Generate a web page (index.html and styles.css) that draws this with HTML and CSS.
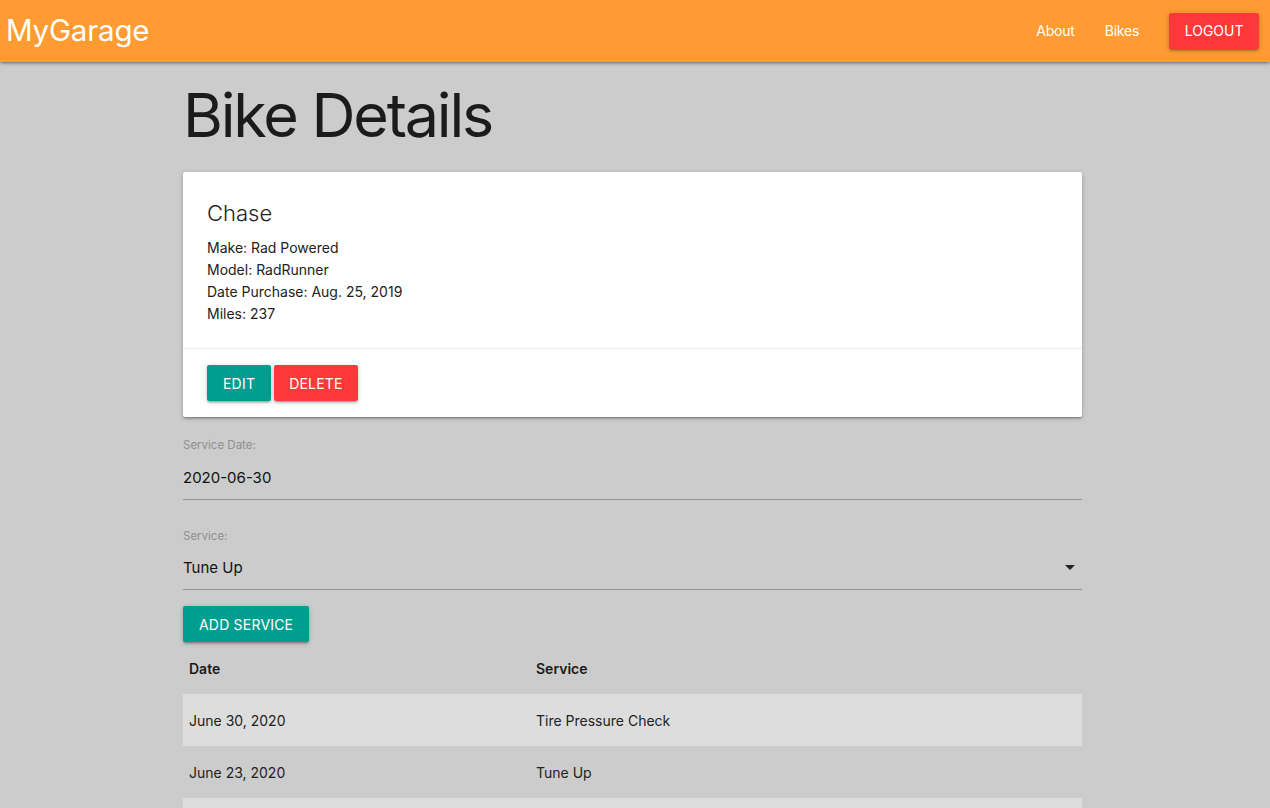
FILE: index.html
```html
<!DOCTYPE html>
<html>
<head>
<meta charset="utf-8">
<title>MyGarage</title>
<link rel="stylesheet" href="styles.css">
</head>
<body>
<nav class="nav">
  <a class="brand" href="#">MyGarage</a>
  <ul class="nav-links">
    <li><a href="#">About</a></li>
    <li><a href="#">Bikes</a></li>
    <li><a class="btn btn-red" href="#">LOGOUT</a></li>
  </ul>
</nav>
<main class="container">
  <h1 class="page-title">Bike Details</h1>
  <div class="card">
    <div class="card-content">
      <span class="card-title">Chase</span>
      <p>Make: Rad Powered</p>
      <p>Model: RadRunner</p>
      <p>Date Purchase: Aug. 25, 2019</p>
      <p>Miles: 237</p>
    </div>
    <div class="card-action">
      <a class="btn btn-teal" href="#">EDIT</a>
      <a class="btn btn-red" href="#">DELETE</a>
    </div>
  </div>
  <form class="service-form">
    <div class="field">
      <label class="field-label">Service Date:</label>
      <div class="field-input">2020-06-30</div>
    </div>
    <div class="field field-select">
      <label class="field-label">Service:</label>
      <div class="field-input">
        <span>Tune Up</span>
        <svg class="caret" width="24" height="24" viewBox="0 0 24 24"><path d="M7 10l5 5 5-5z" fill="#222"/></svg>
      </div>
    </div>
    <button type="button" class="btn btn-teal btn-add">ADD SERVICE</button>
  </form>
  <table class="services">
    <thead>
      <tr><th class="col-date">Date</th><th>Service</th></tr>
    </thead>
    <tbody>
      <tr><td>June 30, 2020</td><td>Tire Pressure Check</td></tr>
      <tr><td>June 23, 2020</td><td>Tune Up</td></tr>
      <tr class="row-empty"><td></td><td></td></tr>
    </tbody>
  </table>
</main>
</body>
</html>
```
FILE: styles.css
```css
* { box-sizing: border-box; }
html, body { margin: 0; padding: 0; }
body {
  background: #cccccc;
  font-family: "Inter", "Roboto", "Liberation Sans", sans-serif;
  font-size: 14px;
  color: rgba(0,0,0,0.87);
  line-height: 1.5;
}
a { text-decoration: none; color: inherit; }

.nav {
  height: 62px;
  background: #ff9b33;
  display: flex;
  align-items: center;
  justify-content: space-between;
  box-shadow: 0 2px 2px 0 rgba(0,0,0,0.14), 0 3px 1px -2px rgba(0,0,0,0.12), 0 1px 5px 0 rgba(0,0,0,0.2);
  position: relative;
}
.brand {
  color: #fff;
  font-size: 29.5px;
  padding-left: 6px;
  letter-spacing: -0.2px;
  margin-top: -2px;
}
.nav-links {
  list-style: none;
  margin: -1px 0 0 0;
  padding: 0 11px 0 0;
  display: flex;
  align-items: center;
}
.nav-links li a { color: #fff; font-size: 14px; padding: 0 15px; letter-spacing: -0.2px; }
.nav-links li:first-child a { padding-right: 15px; }
.nav-links li a.btn { margin-left: 15px; padding: 0 15.5px; letter-spacing: 0; }

.btn {
  display: inline-flex;
  align-items: center;
  justify-content: center;
  height: 36px;
  padding: 0 16px;
  border: none;
  border-radius: 2px;
  color: #fff;
  font-family: inherit;
  font-size: 14px;
  letter-spacing: 0.2px;
  box-shadow: 0 2px 2px 0 rgba(0,0,0,0.14), 0 3px 1px -2px rgba(0,0,0,0.12), 0 1px 5px 0 rgba(0,0,0,0.2);
  cursor: pointer;
}
.btn-red { background: #ff3939; }
.btn-teal { background: #009e8e; }

.container {
  width: 899px;
  margin-left: 183px;
}
.page-title {
  font-size: 61px;
  font-weight: 400;
  line-height: 1.1;
  margin: 20px 0 0 0;
  height: 90px;
  color: #1b1b1b;
  letter-spacing: -2.2px;
}

.card {
  background: #fff;
  border-radius: 2px;
  box-shadow: 0 2px 2px 0 rgba(0,0,0,0.14), 0 3px 1px -2px rgba(0,0,0,0.12), 0 1px 5px 0 rgba(0,0,0,0.2);
}
.card-content { padding: 25px 24px 23px; }
.card-title {
  display: block;
  font-size: 22px;
  font-weight: 300;
  line-height: 32px;
  margin-bottom: 8px;
  color: #222;
}
.card-content p { margin: 0; line-height: 22px; font-size: 14px; color: #222; }
.card-action {
  border-top: 1px solid rgba(160,160,160,0.2);
  padding: 16px 24px;
  display: flex;
  gap: 3px;
}
.card-action .btn { padding: 0 16px; }
.card-action .btn-red { padding: 0 15px; }

.service-form { padding-top: 21px; }
.field { margin-bottom: 8px; }
.field-label {
  display: block;
  font-size: 11.5px;
  color: #8f8f8f;
  line-height: 14px;
  height: 16px;
}
.field-input {
  height: 46px;
  padding-top: 4px;
  border-bottom: 1px solid #949494;
  display: flex;
  align-items: center;
  justify-content: space-between;
  font-size: 15px;
  color: #111;
}
.field-select { margin-top: 29px; }
.field-select .field-label { height: 15px; }
.caret { margin-top: -4px; }
.btn-add { margin-top: 8px; padding: 0 16px; }

.services {
  width: 100%;
  border-collapse: collapse;
  font-size: 14px;
}
.services th, .services td {
  text-align: left;
  padding: 16px 6px 14px;
  line-height: 22px;
  height: 52px;
}
.services th { font-weight: 600; color: #1a1a1a; }
.services td { color: #222; }
.col-date { width: 347px; }
.services tbody tr:nth-child(odd) { background: #dddddd; }
```
